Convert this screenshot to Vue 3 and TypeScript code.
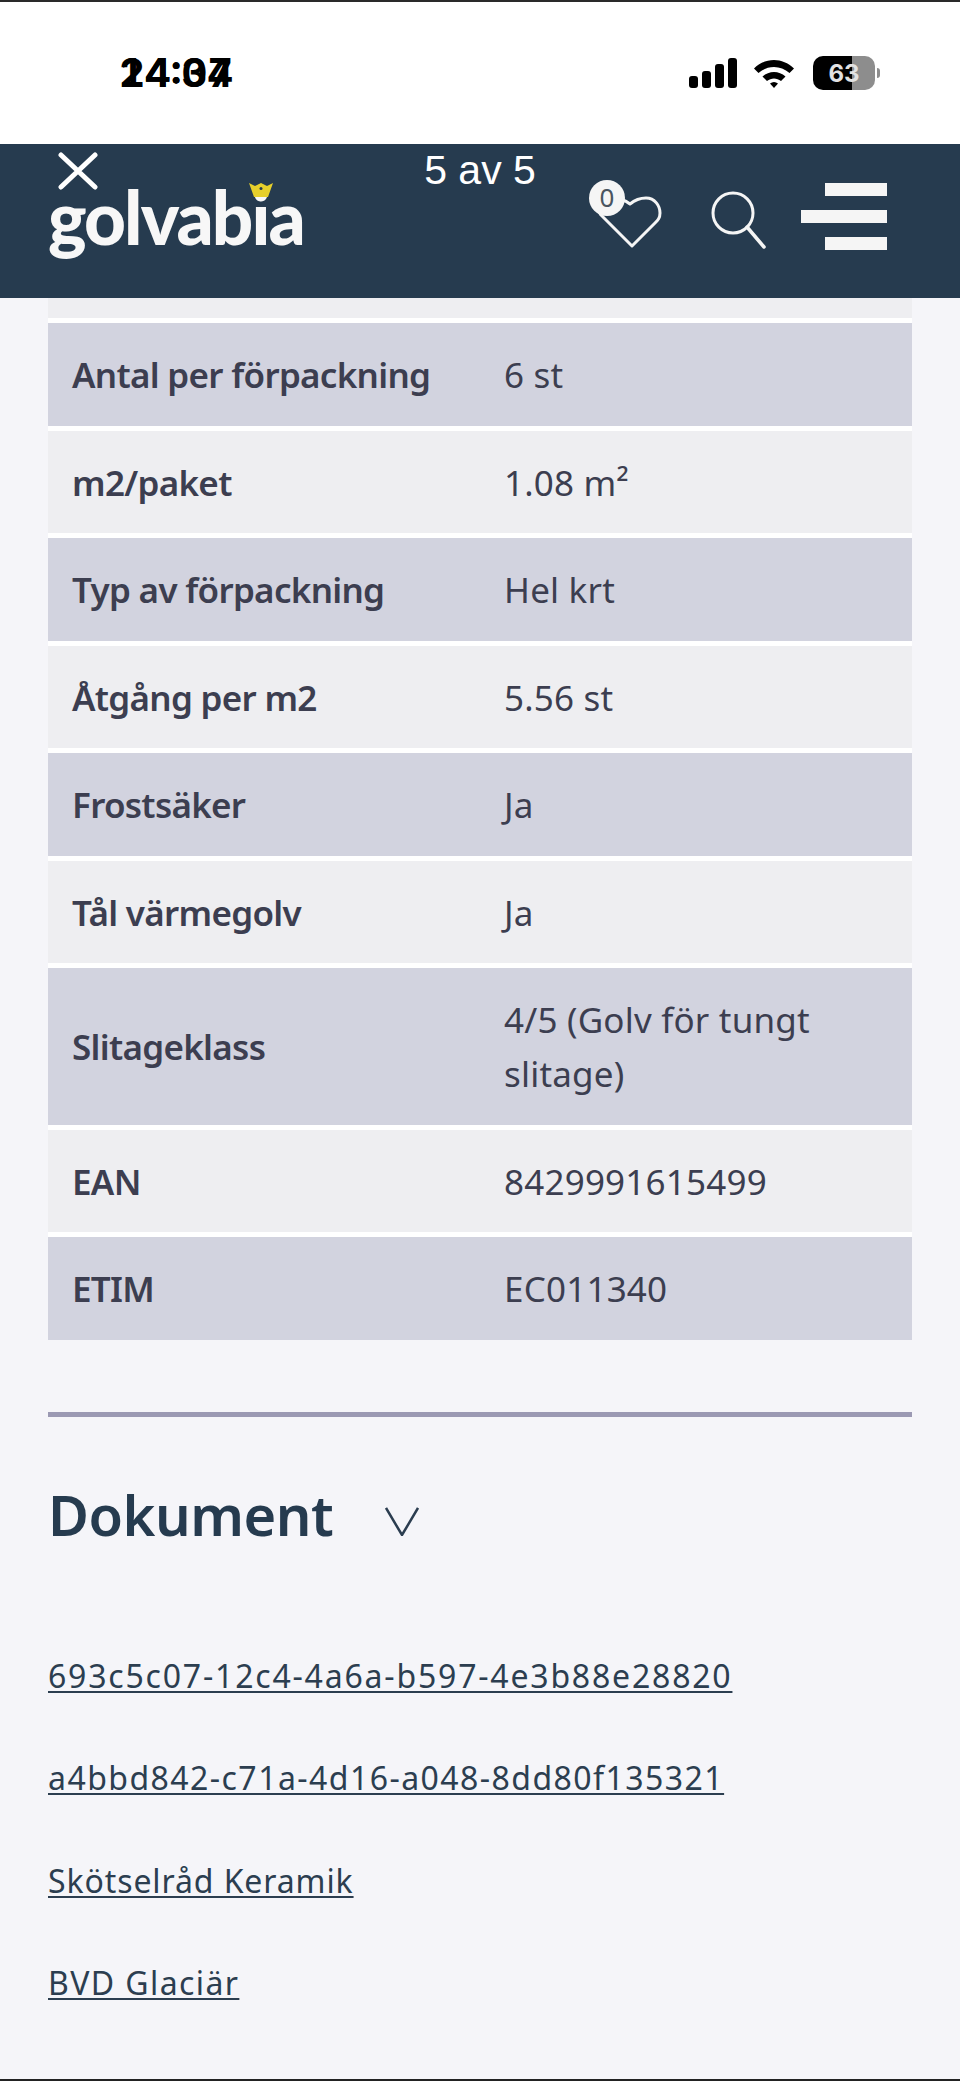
<script setup lang="ts">
interface SpecRow {
  label: string;
  value: string;
}

interface DocLink {
  name: string;
  spacing: number;
}

const specs: SpecRow[] = [
  { label: 'Antal per förpackning', value: '6 st' },
  { label: 'm2/paket', value: '1.08 m²' },
  { label: 'Typ av förpackning', value: 'Hel krt' },
  { label: 'Åtgång per m2', value: '5.56 st' },
  { label: 'Frostsäker', value: 'Ja' },
  { label: 'Tål värmegolv', value: 'Ja' },
  { label: 'Slitageklass', value: '4/5 (Golv för tungt slitage)' },
  { label: 'EAN', value: '8429991615499' },
  { label: 'ETIM', value: 'EC011340' }
];

const documents: DocLink[] = [
  { name: '693c5c07-12c4-4a6a-b597-4e3b88e28820', spacing: 1.8 },
  { name: 'a4bbd842-c71a-4d16-a048-8dd80f135321', spacing: 1.45 },
  { name: 'Skötselråd Keramik', spacing: 0.9 },
  { name: 'BVD Glaciär', spacing: 1.4 }
];
</script>

<template>
  <div class="page">
    <div class="status-bar">
      <div class="clock">
        <span>14:34</span>
        <span class="clock-ghost">24:07</span>
      </div>
      <div class="status-icons">
        <div class="signal">
          <i class="b1"></i><i class="b2"></i><i class="b3"></i><i class="b4"></i>
        </div>
        <svg class="wifi" viewBox="0 0 42 30" width="42" height="30">
          <path d="M1 10.5C12.5 -1 29.5 -1 41 10.5L36.5 15C27.500 7 14.500 7 5.500 15Z" fill="#000" />
          <path d="M9.500 18.500C16 12.500 26 12.500 32.500 18.500L28 23C23.800 19.500 18.200 19.500 14 23Z" fill="#000" />
          <path d="M17 25.500C19.500 23.500 22.500 23.500 25 25.500L21 30Z" fill="#000" />
        </svg>
        <div class="battery">
          <div class="battery-body"><span>63</span></div>
          <div class="battery-cap"></div>
        </div>
      </div>
    </div>

    <header class="site-header">
      <svg class="close" viewBox="0 0 40 38" width="40" height="38">
        <path d="M3 3L37 35M37 3L3 35" stroke="#fff" stroke-width="5" stroke-linecap="round" />
      </svg>
      <div class="counter">5 av 5</div>

      <div class="logo">
        <span class="logo-text">golvabia</span>
        <svg class="crown" viewBox="0 0 24 14" width="24" height="14">
          <path d="M0 0L6 3L12 0L18 3L24 0L19 14H5Z" fill="#e6cf2b" />
          <circle cx="12" cy="5.500" r="1.500" fill="#263b4f" />
        </svg>
      </div>

      <div class="actions">
        <div class="wish">
          <svg viewBox="0 0 70 60" width="70" height="60">
            <path d="M40 51L9 20C3 12 8 3 20 3C28 3 33 5 38 9C44 4 49 3 54 3C63 3 68 11 68 18C68 23 66 25 63 28Z" fill="none" stroke="#f5f5f5" stroke-width="3" stroke-linejoin="round" />
          </svg>
          <span class="wish-badge">0</span>
        </div>
        <svg class="search" viewBox="0 0 56 58" width="56" height="58">
          <circle cx="22" cy="22" r="20" fill="none" stroke="#f5f5f5" stroke-width="3" />
          <path d="M36 36L53 56" stroke="#f5f5f5" stroke-width="3.500" stroke-linecap="round" />
        </svg>
        <div class="burger">
          <i></i>
          <i class="wide"></i>
          <i></i>
        </div>
      </div>
    </header>

    <main class="content">
      <div class="spec-table">
        <div class="spec-stub"></div>
        <div v-for="(row, i) in specs" :key="row.label" class="spec-row" :class="{ shaded: i % 2 === 0 }">
          <div class="spec-label">{{ row.label }}</div>
          <div class="spec-value">{{ row.value }}</div>
        </div>
      </div>

      <hr class="divider" />

      <div class="doc-head">
        <h2>Dokument</h2>
        <svg viewBox="0 0 34 29" width="34" height="29">
          <path d="M1 1L17 28L33 1" fill="none" stroke="#2b3d50" stroke-width="2.500" />
        </svg>
      </div>

      <div class="doc-list">
        <a
          v-for="doc in documents"
          :key="doc.name"
          href="#"
          :style="{ letterSpacing: `${doc.spacing}px` }"
        >{{ doc.name }}</a>
      </div>
    </main>
  </div>
</template>

<style>
html,
body {
  margin: 0;
  background: #f5f5f9;
}
</style>

<style scoped>
.page {
  width: 960px;
  height: 2081px;
  box-sizing: border-box;
  overflow: hidden;
  display: flex;
  flex-direction: column;
  background: #f5f5f9;
  border-bottom: 2px solid #222;
  font-family: 'Noto Sans', sans-serif;
}

.status-bar {
  height: 144px;
  box-sizing: border-box;
  flex: none;
  border-top: 2px solid #2a2a2a;
  background: #fff;
  display: flex;
  justify-content: space-between;
  padding: 55px 80px 0 119px;
}

.clock {
  position: relative;
  font-family: Inter, sans-serif;
  font-weight: 700;
  font-size: 40px;
  line-height: 32px;
  font-variant-numeric: tabular-nums;
  color: #000;
  height: 32px;
}

.clock-ghost {
  position: absolute;
  left: 0;
  top: 0;
}

.status-icons {
  display: flex;
  align-items: center;
  height: 32px;
}

.signal {
  display: flex;
  align-items: flex-end;
  gap: 4px;
  height: 30px;
  margin-right: 16px;
}

.signal i {
  display: block;
  width: 9px;
  border-radius: 3px;
  background: #000;
}

.signal .b1 {
  height: 12px;
}

.signal .b2 {
  height: 17px;
}

.signal .b3 {
  height: 24px;
}

.signal .b4 {
  height: 30px;
}

.wifi {
  margin-right: 18px;
}

.battery {
  display: flex;
  align-items: center;
}

.battery-body {
  width: 62px;
  height: 34px;
  border-radius: 10px;
  background: linear-gradient(90deg, #000 0 39px, #8d8d8d 39px);
  display: flex;
  align-items: center;
  justify-content: center;
  color: #e2e2e2;
  font-family: Inter, sans-serif;
  font-weight: 700;
  font-size: 24px;
}

.battery-cap {
  width: 3px;
  height: 10px;
  margin-left: 2px;
  border-radius: 0 3px 3px 0;
  background: #8d8d8d;
}

.site-header {
  position: relative;
  height: 154px;
  flex: none;
  box-sizing: border-box;
  background: #263b4f;
  display: flex;
  justify-content: space-between;
  padding: 0 73px 0 48px;
}

.close {
  position: absolute;
  left: 58px;
  top: 8px;
}

.counter {
  position: absolute;
  left: 0;
  right: 0;
  top: 3px;
  text-align: center;
  font-family: 'Liberation Sans', sans-serif;
  font-size: 41px;
  line-height: 46px;
  color: #fff;
}

.logo {
  position: relative;
  width: 255px;
  height: 100%;
}

.logo-text {
  display: block;
  padding-top: 27px;
  font-family: Lato, sans-serif;
  font-weight: 900;
  font-size: 75px;
  line-height: 90px;
  letter-spacing: -2px;
  color: #f7f7f7;
  transform: scaleX(0.97);
  transform-origin: left top;
  white-space: nowrap;
}

.crown {
  position: absolute;
  left: 201px;
  top: 39px;
}

.actions {
  display: flex;
  align-items: flex-start;
  padding-top: 39px;
}

.wish {
  position: relative;
  width: 70px;
  height: 60px;
  margin-top: 12px;
  margin-right: 49px;
}

.wish-badge {
  position: absolute;
  left: -3px;
  top: -15px;
  width: 36px;
  height: 36px;
  border-radius: 50%;
  background: #f5f5f5;
  color: #4a5560;
  font-size: 26px;
  line-height: 34px;
  text-align: center;
}

.search {
  margin-top: 8px;
  margin-right: 34px;
}

.burger {
  display: flex;
  flex-direction: column;
  align-items: flex-end;
  gap: 14px;
  width: 86px;
}

.burger i {
  display: block;
  width: 62px;
  height: 13px;
  background: #f5f5f5;
}

.burger .wide {
  width: 86px;
}

.content {
  padding: 0 48px;
}

.spec-table {
  display: flex;
  flex-direction: column;
  gap: 5px;
  background: #fff;
}

.spec-stub {
  height: 20px;
  background: #eeeef1;
}

.spec-row {
  display: grid;
  grid-template-columns: 432px 1fr;
  align-items: center;
  padding: 25.25px 24px 23.25px;
  background: #eeeef1;
  font-size: 35px;
  line-height: 54px;
  color: #3c3e50;
}

.spec-row.shaded {
  background: #d2d3df;
}

.spec-label {
  font-weight: 600;
  letter-spacing: -0.7px;
}

.spec-value {
  padding-right: 60px;
  letter-spacing: 0.2px;
}

.divider {
  margin: 72px 0 0;
  height: 5px;
  border: 0;
  background: #9b99b3;
}

.doc-head {
  display: flex;
  align-items: flex-end;
  gap: 52px;
  margin-top: 61px;
}

.doc-head h2 {
  margin: 0;
  font-size: 56px;
  line-height: 72px;
  font-weight: 600;
  letter-spacing: -0.5px;
  color: #263b4f;
}

.doc-head svg {
  margin-bottom: 14px;
}

.doc-list {
  display: flex;
  flex-direction: column;
  align-items: flex-start;
  gap: 58.500px;
  margin-top: 104px;
}

.doc-list a {
  font-size: 32px;
  line-height: 44px;
  color: #2c3e50;
  text-decoration: underline;
  text-decoration-thickness: 2px;
  text-underline-offset: 3px;
}
</style>
